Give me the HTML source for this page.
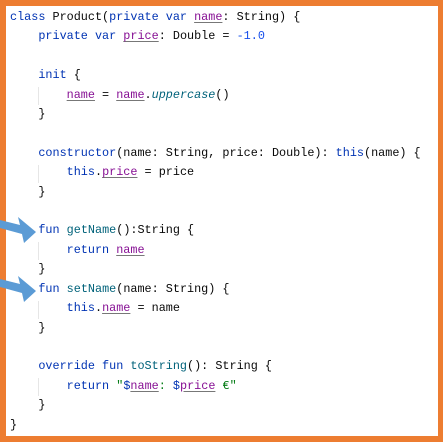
<!DOCTYPE html><html><head><style>
body{margin:0;width:446px;height:445px;background:#fff;position:relative;overflow:hidden}
.box{position:absolute;left:0;top:0;width:432px;height:430px;border:6px solid #ed7d31;border-right-width:5px;border-bottom-width:6px;background:#fff}
pre{position:absolute;left:10px;top:8px;margin:0;font-family:"Liberation Mono",monospace;font-size:11.8px;line-height:19.4px;color:#080808}
.k{color:#0033b3}.p{color:#871094;text-decoration:underline;text-decoration-color:#777;text-underline-offset:2px}.f{color:#00627a}.n{color:#1750eb}.s{color:#067d17}.i{font-style:italic;color:#00627a}
.g{position:absolute;width:1px;background:#e6e6e6}
</style></head><body><div class="box"></div>
<div class="g" style="left:38px;top:87px;height:18px"></div>
<div class="g" style="left:38px;top:165px;height:18px"></div>
<div class="g" style="left:38px;top:242px;height:18px"></div>
<div class="g" style="left:38px;top:301px;height:18px"></div>
<div class="g" style="left:38px;top:378px;height:18px"></div>
<pre><span class="k">class</span> Product(<span class="k">private var</span> <span class="p">name</span>: String) {
    <span class="k">private var</span> <span class="p">price</span>: Double = <span class="n">-1.0</span>

    <span class="k">init</span> {
        <span class="p">name</span> = <span class="p">name</span>.<span class="i">uppercase</span>()
    }

    <span class="k">constructor</span>(name: String, price: Double): <span class="k">this</span>(name) {
        <span class="k">this</span>.<span class="p">price</span> = price
    }

    <span class="k">fun</span> <span class="f">getName</span>():String {
        <span class="k">return</span> <span class="p">name</span>
    }
    <span class="k">fun</span> <span class="f">setName</span>(name: String) {
        <span class="k">this</span>.<span class="p">name</span> = name
    }

    <span class="k">override fun</span> <span class="f">toString</span>(): String {
        <span class="k">return</span> <span class="s">"</span><span class="k">$</span><span class="p">name</span><span class="s">: </span><span class="k">$</span><span class="p">price</span><span class="s"> €"</span>
    }
}</pre>
<svg style="position:absolute;left:0;top:0" width="446" height="445">
<g fill="#5b9bd5">
<polygon points="0,220 20,225 18,217 36,232 24,243 22,234 0,228"/>
<polygon points="0,279 20,284 18,276 36,291 24,302 22,293 0,287"/>
</g></svg>
</body></html>
